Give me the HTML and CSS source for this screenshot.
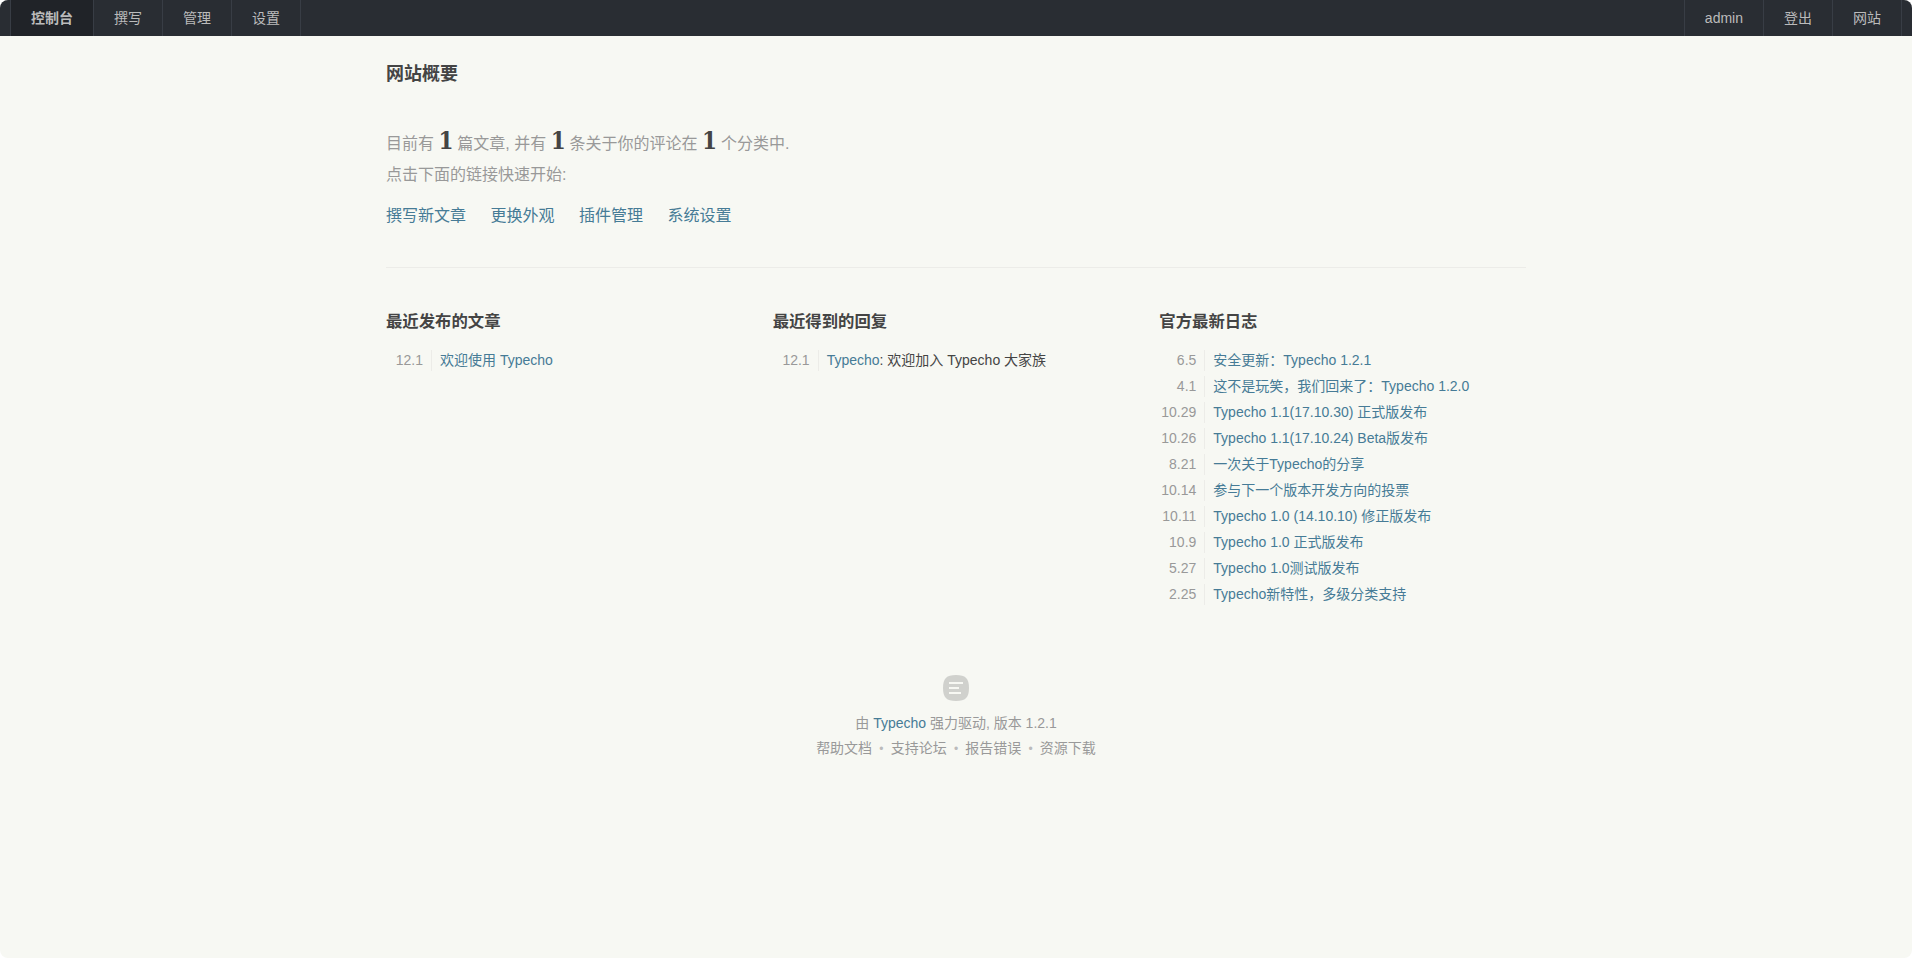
FILE: index.html
```html
<!DOCTYPE html>
<html lang="zh-CN">
<head>
    <meta charset="UTF-8">
    <meta name="viewport" content="width=device-width, initial-scale=1.0">
    <title>网站概要 - Typecho</title>
    <link rel="stylesheet" href="styles.css">
</head>
<body>
    <div class="page">
        <header class="head-nav">
            <nav class="menu">
                <a href="#" class="focus">控制台</a>
                <a href="#">撰写</a>
                <a href="#">管理</a>
                <a href="#">设置</a>
            </nav>
            <div class="operate">
                <a href="#">admin</a>
                <a href="#">登出</a>
                <a href="#">网站</a>
            </div>
        </header>

        <main class="container">
            <h2 class="page-title">网站概要</h2>

            <section class="welcome">
                <p>目前有 <em>1</em> 篇文章, 并有 <em>1</em> 条关于你的评论在 <em>1</em> 个分类中.<br>点击下面的链接快速开始:</p>
                <ul class="start-link">
                    <li><a href="#">撰写新文章</a></li>
                    <li><a href="#">更换外观</a></li>
                    <li><a href="#">插件管理</a></li>
                    <li><a href="#">系统设置</a></li>
                </ul>
            </section>

            <div class="dashboard">
                <section>
                    <h3>最近发布的文章</h3>
                    <ul class="latest">
                        <li><span>12.1</span><a href="#">欢迎使用 Typecho</a></li>
                    </ul>
                </section>
                <section>
                    <h3>最近得到的回复</h3>
                    <ul class="latest">
                        <li><span>12.1</span><a href="#">Typecho</a>: 欢迎加入 Typecho 大家族</li>
                    </ul>
                </section>
                <section>
                    <h3>官方最新日志</h3>
                    <ul class="latest">
                        <li><span>6.5</span><a href="#">安全更新：Typecho 1.2.1</a></li>
                        <li><span>4.1</span><a href="#">这不是玩笑，我们回来了：Typecho 1.2.0</a></li>
                        <li><span>10.29</span><a href="#">Typecho 1.1(17.10.30) 正式版发布</a></li>
                        <li><span>10.26</span><a href="#">Typecho 1.1(17.10.24) Beta版发布</a></li>
                        <li><span>8.21</span><a href="#">一次关于Typecho的分享</a></li>
                        <li><span>10.14</span><a href="#">参与下一个版本开发方向的投票</a></li>
                        <li><span>10.11</span><a href="#">Typecho 1.0 (14.10.10) 修正版发布</a></li>
                        <li><span>10.9</span><a href="#">Typecho 1.0 正式版发布</a></li>
                        <li><span>5.27</span><a href="#">Typecho 1.0测试版发布</a></li>
                        <li><span>2.25</span><a href="#">Typecho新特性，多级分类支持</a></li>
                    </ul>
                </section>
            </div>
        </main>

        <footer class="foot">
            <svg class="logo" viewBox="0 0 26 26" width="26" height="26">
                <path fill="#d0d1cd" d="M13 0C3.4 0 0 3.4 0 13s3.4 13 13 13 13-3.4 13-13S22.600 0 13 0z"/>
                <path fill="#f7f8f3" d="M6 7h14v2H6zM6 12h10v2H6zM6 17h12v2H6z"/>
            </svg>
            <p>由 <a href="#">Typecho</a> 强力驱动, 版本 1.2.1</p>
            <nav class="resource">
                <a href="#">帮助文档</a><i>•</i><a href="#">支持论坛</a><i>•</i><a href="#">报告错误</a><i>•</i><a href="#">资源下载</a>
            </nav>
        </footer>
    </div>
</body>
</html>
```

FILE: styles.css
```css
* {
    margin: 0;
    padding: 0;
    box-sizing: border-box;
}

body {
    background: #fff;
    color: #444;
    font: 14px/21px "Liberation Sans", "Noto Sans CJK SC", sans-serif;
}

a {
    color: #467b96;
    text-decoration: none;
}

ul {
    list-style: none;
}

.page {
    min-height: 100vh;
    background: #f7f8f3;
    border-radius: 8px;
    overflow: hidden;
}

/* top bar */
.head-nav {
    display: flex;
    justify-content: space-between;
    height: 36px;
    padding: 0 10px;
    background: #292d33;
}

.menu, .operate {
    display: flex;
    border-left: 1px solid #383d45;
}

.head-nav a {
    padding: 0 20px;
    border-right: 1px solid #383d45;
    color: #bbb;
    line-height: 36px;
}

.head-nav .focus {
    background: #202328;
    font-weight: bold;
}

/* content */
.container {
    width: 1140px;
    margin: 0 auto;
}

.page-title {
    padding-top: 25px;
    font-size: 18px;
    line-height: 27px;
}

.welcome {
    height: 180px;
    padding-top: 40px;
    border-bottom: 1px solid #ecece8;
    color: #999;
    font-size: 16px;
}

.welcome p {
    line-height: 31px;
}

.welcome em {
    margin-right: -0.6px;
    color: #444;
    font: bold condensed 24px/1 "DejaVu Serif", "DejaVu Serif Condensed", serif;
}

.start-link {
    display: flex;
    gap: 24.5px;
    margin-top: 14px;
    line-height: 24px;
}

.dashboard {
    display: grid;
    grid-template-columns: repeat(3, 1fr);
    gap: 20px;
    padding-top: 41px;
}

.dashboard h3 {
    margin-bottom: 17px;
    font-size: 1.17em;
    line-height: 24px;
}

.latest li {
    display: flex;
    height: 21px;
    margin-bottom: 5px;
    white-space: pre;
}

.latest span {
    width: 46px;
    margin-right: 8px;
    padding-right: 8px;
    border-right: 1px solid #ecece8;
    color: #999;
    text-align: right;
}

/* footer */
.foot {
    padding-top: 65px;
    color: #999;
    text-align: center;
    line-height: 25px;
}

.logo {
    display: block;
    margin: 0 auto 10px;
}

.resource a {
    color: #999;
}

.resource i {
    margin: 0 7.2px;
    color: #bbb;
    font-size: 12px;
    font-style: normal;
}
```
